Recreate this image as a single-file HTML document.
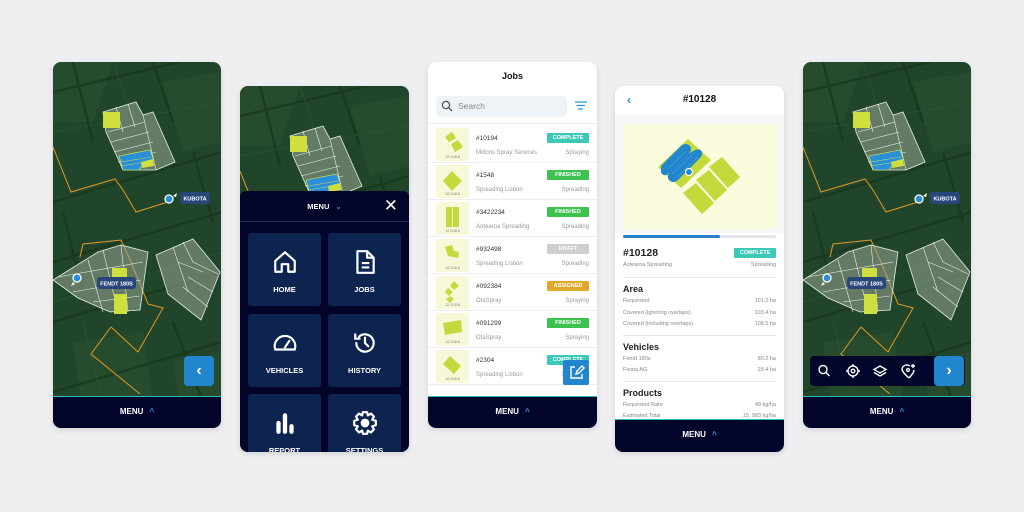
<!DOCTYPE html>
<html><head><meta charset="utf-8"><style>
*{box-sizing:border-box;margin:0;padding:0}
body{width:1024px;height:512px;background:#efeff1;font-family:"Liberation Sans",sans-serif;position:relative;overflow:hidden}
.ph{position:absolute;width:169px;height:366px;border-radius:8px;overflow:hidden;background:#fff;box-shadow:0 2px 6px rgba(0,0,0,.12)}
.map{position:absolute;left:0;top:0}
.menubar{position:absolute;left:0;right:0;bottom:0;height:32px;background:#03042a;border-top:1.5px solid #2bbfc0;color:#fff;font-size:8px;font-weight:bold;text-align:center;line-height:30px}
.menubar span{color:#3a8fd6;margin-left:6px;font-size:8px}
.tile{position:absolute;width:73px;height:73px;background:#0d2350;border-radius:3px;color:#fff;font-size:7.5px;font-weight:bold;text-align:center}
.tile svg{position:absolute;left:24px;top:16px}
.tile div{position:absolute;left:0;right:0;top:52px}
.row{position:absolute;left:0;width:169px;height:37px;border-bottom:1px solid #eee;font-size:6px;color:#999}
.thumb{position:absolute;left:8px;top:2px;width:33px;height:33px;background:#f8f8d8;border-radius:2px}
.thumb i{position:absolute;bottom:2px;left:0;right:0;text-align:center;font-style:normal;font-size:3.5px;color:#777}
.num{position:absolute;left:48px;top:9px;font-size:6.5px;color:#333}
.co{position:absolute;left:48px;top:24px}
.ty{position:absolute;right:8px;top:24px}
.bd{position:absolute;right:8px;top:7px;width:42px;height:10px;border-radius:1px;color:#fff;font-size:5.5px;font-weight:bold;text-align:center;line-height:10px}
.kv{display:flex;justify-content:space-between;font-size:5.5px;color:#888;height:11.5px}
.h{font-size:9px;font-weight:bold;color:#222;margin:6px 0 4px}
.sep{border-top:1px solid #e6e6e6;margin-top:2px}
</style></head><body>

<svg width="0" height="0" style="position:absolute">
<defs>
<g id="mapg">
<rect width="169" height="366" fill="#21452a"/>
<g fill="#2a5230" opacity=".6"><path d="M0 0 H60 L40 60 H0Z M110 20 L169 10 V80 L130 90Z M20 280 L90 270 L100 340 L30 350Z M120 300 L169 290 V366 H130Z"/></g>
<g stroke="#16331a" stroke-width="2.5" opacity=".6">
<path d="M0 30 L169 -10 M0 140 L169 90 M0 200 L169 150 M0 260 L169 210 M0 330 L169 280"/>
<path d="M20 0 L40 80 M100 0 L120 60 M140 90 L160 160 M10 150 L30 230 M120 260 L150 340"/>
</g>
<g stroke="#2d5a33" stroke-width="1.2" opacity=".5"><path d="M0 70 L169 40 M0 240 L169 190 M60 0 L80 60 M30 260 L50 340"/></g>
<path d="M0 85 L18 130 L62 117 L70 128 L83 150 L115 140" fill="none" stroke="#e09a28" stroke-width="1"/>
<path d="M27 195 L30 182 L68 178 L78 200 L95 242 L110 246 L85 290 L58 265 L38 292 L87 332" fill="none" stroke="#e09a28" stroke-width="1"/>
<g fill="#9aa896" fill-opacity=".55" stroke="#e8efe6" stroke-width=".8">
<path d="M50 50 L83 40 L90 53 L100 50 L122 100 L103 108 L70 108 L53 70 Z"/>
<path d="M0 218 L45 190 L68 183 L95 190 L87 248 L57 250 L25 236 Z"/>
<path d="M103 193 L140 177 L167 210 L148 258 L115 232 Z"/>
</g>
<g stroke="#e8efe6" stroke-width=".6" fill="none">
<path d="M55 70 L92 60 M58 80 L96 70 M61 90 L100 80 M65 100 L103 90 M63 45 L70 70 M75 42 L82 65 M90 53 L103 108"/>
<path d="M5 215 L90 200 M20 230 L88 218 M40 240 L87 234 M35 198 L50 250 M50 188 L65 250 M68 183 L75 250"/>
<path d="M120 185 L135 230 M130 180 L140 200 M140 200 L165 212 M135 215 L160 230 M130 225 L155 245 M125 200 L150 210"/>
</g>
<rect x="50" y="50" width="17" height="16" fill="#cfe03e"/>
<rect x="59" y="206" width="15" height="14" fill="#cfe03e"/>
<rect x="61" y="232" width="13" height="20" fill="#cfe03e"/>
<path d="M66 94 L97 88 L102 102 L88 105 L86 108 L70 108 Z" fill="#2a8fd8" stroke="#e6f040" stroke-width=".6"/>
<path d="M68 100 L98 95 M68 104 L99 99" stroke="#e6f040" stroke-width=".4"/>
<path d="M88 100 L100 97 L101 104 L89 106Z" fill="#cfe03e"/>
<circle cx="116" cy="137" r="4" fill="#2a8fd8" stroke="#fff" stroke-width="1.3"/>
<path d="M120 134 L124 131 L123 135Z" fill="#fff"/>
<circle cx="24" cy="216" r="4" fill="#2a8fd8" stroke="#fff" stroke-width="1.3"/>
<path d="M20 220 L18 224 L22 222Z" fill="#fff"/>
<rect x="127" y="130" width="30" height="12" rx="3" fill="#28467a"/>
<text x="142" y="138.5" font-size="5.5" fill="#fff" text-anchor="middle" font-family="Liberation Sans" font-weight="bold">KUBOTA</text>
<rect x="44" y="215" width="39" height="12" rx="3" fill="#28467a"/>
<text x="63.5" y="223.5" font-size="5.5" fill="#fff" text-anchor="middle" font-family="Liberation Sans" font-weight="bold">FENDT 180S</text>
</g>
</defs></svg>

<!-- Phone 1 -->
<div class="ph" style="left:53px;top:62px;width:168px">
<svg class="map" width="169" height="366"><use href="#mapg"/></svg>
<div style="position:absolute;left:131px;top:294px;width:30px;height:30px;background:#2286cf;border-radius:4px;color:#fff;text-align:center;line-height:30px;font-size:16px;font-weight:bold">‹</div>
<div class="menubar">MENU<span>^</span></div>
</div>

<!-- Phone 2 -->
<div class="ph" style="left:240px;top:86px">
<svg class="map" width="169" height="366"><use href="#mapg"/></svg>
<div style="position:absolute;left:0;top:105px;width:169px;height:261px;background:#03042a;border-radius:6px 6px 0 0">
<div style="position:absolute;left:0;right:0;top:0;height:31px;border-bottom:1px solid #1c2b55;color:#fff;font-size:7.5px;font-weight:bold;text-align:center;line-height:31px">MENU<span style="color:#3a8fd6;margin-left:6px">⌄</span></div>
<div style="position:absolute;right:11px;top:6px;color:#fff;font-size:17px;line-height:17px">✕</div>
<div class="tile" style="left:8px;top:42px"><svg width="26" height="26" viewBox="0 0 24 24" fill="none" stroke="#fff" stroke-width="2" stroke-linejoin="round"><path d="M3 11 L12 3 L21 11 V21 H15 V14 H9 V21 H3 Z"/></svg><div>HOME</div></div>
<div class="tile" style="left:88px;top:42px"><svg width="26" height="26" viewBox="0 0 24 24" fill="none" stroke="#fff" stroke-width="2" stroke-linejoin="round"><path d="M5 2 H14 L20 8 V22 H5 Z M14 2 V8 H20 M9 13 H16 M9 17 H16"/></svg><div>JOBS</div></div>
<div class="tile" style="left:8px;top:123px"><svg width="26" height="26" viewBox="0 0 24 24" fill="none" stroke="#fff" stroke-width="2" stroke-linecap="round"><path d="M3 18 A9.5 9.5 0 1 1 21 18 Z M12 16 L16 10"/></svg><div>VEHICLES</div></div>
<div class="tile" style="left:88px;top:123px"><svg width="26" height="26" viewBox="0 0 24 24" fill="none" stroke="#fff" stroke-width="2" stroke-linecap="round"><path d="M4 12 A8 8 0 1 0 6.5 6.2 M3 4 V8 H7 M12 7 V12 L15 15"/></svg><div>HISTORY</div></div>
<div class="tile" style="left:8px;top:203px"><svg width="26" height="26" viewBox="0 0 24 24" fill="#fff"><rect x="4" y="10" width="4" height="12" rx="2"/><rect x="10" y="3" width="4" height="19" rx="2"/><rect x="16" y="13" width="4" height="9" rx="2"/></svg><div>REPORT</div></div>
<div class="tile" style="left:88px;top:203px"><svg width="26" height="26" viewBox="0 0 24 24" fill="none" stroke="#fff" stroke-width="2"><circle cx="12" cy="12" r="3" fill="#fff"/><path d="M10 2 H14 L14.6 5 L17.5 3.3 L20.3 6.1 L18.6 9 L22 10 V14 L18.6 15 L20.3 17.9 L17.5 20.7 L14.6 19 L14 22 H10 L9.4 19 L6.5 20.7 L3.7 17.9 L5.4 15 L2 14 V10 L5.4 9 L3.7 6.1 L6.5 3.3 L9.4 5 Z" stroke-linejoin="round"/></svg><div>SETTINGS</div></div>
</div>
</div>

<!-- Phone 3 Jobs -->
<div class="ph" style="left:428px;top:62px">
<div style="position:absolute;left:0;right:0;top:9px;text-align:center;font-size:9px;font-weight:bold;color:#111">Jobs</div>
<div style="position:absolute;left:8px;top:34px;width:131px;height:21px;background:#eef3f8;border-radius:4px"></div>
<svg style="position:absolute;left:13px;top:38px" width="12" height="12" viewBox="0 0 12 12" fill="none" stroke="#555" stroke-width="1.3"><circle cx="5" cy="5" r="3.6"/><path d="M7.7 7.7 L11 11"/></svg>
<div style="position:absolute;left:30px;top:39px;font-size:8.5px;color:#888">Search</div>
<svg style="position:absolute;left:147px;top:39px" width="12" height="10"><path d="M0 1 H12 M1.5 4.5 H10 M3 8 H8" stroke="#2a8fd8" stroke-width="1.2"/></svg>
<div style="position:absolute;left:0;right:0;top:61px;height:1px;background:#eee"></div>
<div class="row" style="top:64px"><div class="thumb"><svg width="33" height="33"><path d="M9 9 L16 4 L20 10 L13 14Z M15 16 L22 12 L27 19 L19 24Z" fill="#c3d93c"/></svg><i>12.1/18.6</i></div><div class="num">#10194</div><div class="co">Miltons Spray Services</div><div class="ty">Spraying</div><div class="bd" style="background:#3ec8b8">COMPLETE</div></div>
<div class="row" style="top:101px"><div class="thumb"><svg width="33" height="33"><path d="M16 6 L26 16 L16 26 L7 16Z" fill="#c3d93c"/></svg><i>12.1/18.6</i></div><div class="num">#1548</div><div class="co">Spreading Lisbon</div><div class="ty">Spreading</div><div class="bd" style="background:#3ec24f">FINISHED</div></div>
<div class="row" style="top:138px"><div class="thumb"><svg width="33" height="33"><path d="M10 5 H16 V25 H10Z M17 5 H23 V25 H17Z" fill="#c3d93c"/></svg><i>12.1/18.6</i></div><div class="num">#3422234</div><div class="co">Aotearoa Spreading</div><div class="ty">Spreading</div><div class="bd" style="background:#3ec24f">FINISHED</div></div>
<div class="row" style="top:175px"><div class="thumb"><svg width="33" height="33"><path d="M9 8 L16 6 L18 12 L23 13 L22 19 L12 17Z" fill="#c3d93c"/></svg><i>12.1/18.6</i></div><div class="num">#932498</div><div class="co">Spreading Lisbon</div><div class="ty">Spreading</div><div class="bd" style="background:#cfcfcf">DRAFT</div></div>
<div class="row" style="top:212px"><div class="thumb"><svg width="33" height="33"><path d="M18 5 L23 10 L18 14 L14 10Z M12 12 L17 16 L13 20 L9 16Z M14 20 L18 23 L14 27 L10 23Z" fill="#c3d93c"/></svg><i>12.1/18.6</i></div><div class="num">#092384</div><div class="co">OtaSpray</div><div class="ty">Spraying</div><div class="bd" style="background:#e0a92c">ASSIGNED</div></div>
<div class="row" style="top:249px"><div class="thumb"><svg width="33" height="33"><path d="M7 10 L25 7 L26 19 L9 22Z" fill="#c3d93c"/></svg><i>12.1/18.6</i></div><div class="num">#091299</div><div class="co">OtaSpray</div><div class="ty">Spraying</div><div class="bd" style="background:#3ec24f">FINISHED</div></div>
<div class="row" style="top:286px"><div class="thumb"><svg width="33" height="33"><path d="M14 6 L25 16 L18 24 L7 14Z" fill="#c3d93c"/></svg><i>12.1/18.6</i></div><div class="num">#2304</div><div class="co">Spreading Lisbon</div><div class="ty">Spreading</div><div class="bd" style="background:#3ec8b8">COMPLETE</div></div>
<div style="position:absolute;left:135px;top:298px;width:26px;height:25px;background:#2286cf;border-radius:2px"><svg width="26" height="25" viewBox="0 0 26 25" fill="none" stroke="#fff" stroke-width="1.4"><path d="M12 7 H8 V18 H19 V14 M13 14 L14 11 L19 6 L21 8 L16 13 Z"/></svg></div>
<div class="menubar">MENU<span>^</span></div>
</div>

<!-- Phone 4 detail -->
<div class="ph" style="left:615px;top:86px">
<div style="position:absolute;left:12px;top:7px;color:#2a8fd8;font-size:12px;font-weight:bold">‹</div>
<div style="position:absolute;left:0;right:0;top:8px;text-align:center;font-size:10px;font-weight:bold;color:#111">#10128</div>
<div style="position:absolute;left:0;right:0;top:29px;height:118px;background:#f7f7f7"></div>
<div style="position:absolute;left:9px;top:38px;width:153px;height:105px;background:#fafadc;border-radius:3px">
<svg width="153" height="105"><g fill="#c3d93c"><path d="M34 43 L64 15 L87 36 L57 64Z"/><path d="M59 69 L72 59 L90 79 L78 90Z M72 56 L85 46 L103 66 L91 77Z M85 43 L98 33 L116 53 L104 64Z"/></g>
<path d="M37 42 L57 22 Q62 18 66 22 Q69 26 64 30 L71 26 Q76 24 78 28 Q79 32 74 36 L54 56 Q49 60 45 56 Q42 52 47 47 L43 51 Q38 52 37 48Z" fill="#2286cf"/>
<path d="M44 45 L62 27 M48 50 L70 29 M52 54 L74 33" stroke="#7fc0ee" stroke-width=".4"/>
<circle cx="65" cy="48" r="3.5" fill="#2286cf" stroke="#fff" stroke-width="1.2"/></svg></div>
<div style="position:absolute;left:8px;top:149px;width:153px;height:3px;background:#e4e7ec;border-radius:2px"><div style="width:97px;height:3px;background:#2a7fc7;border-radius:2px"></div></div>
<div style="position:absolute;left:8px;top:161px;font-size:10.5px;font-weight:bold;color:#222">#10128</div>
<div style="position:absolute;right:8px;top:162px;width:42px;height:10px;background:#3ec8b8;color:#fff;font-size:5.5px;font-weight:bold;text-align:center;line-height:10px;border-radius:1px">COMPLETE</div>
<div style="position:absolute;left:8px;right:8px;top:176px" class="kv"><span>Aotearoa Spreading</span><span>Spreading</span></div>
<div style="position:absolute;left:8px;right:8px;top:189px">
<div class="sep"></div>
<div class="h">Area</div>
<div class="kv"><span>Requested</span><span>101.2 ha</span></div>
<div class="kv"><span>Covered (ignoring overlaps)</span><span>103.4 ha</span></div>
<div class="kv"><span>Covered (including overlaps)</span><span>108.5 ha</span></div>
<div class="sep" style="margin-top:2px"></div>
<div class="h">Vehicles</div>
<div class="kv"><span>Fendt 180s</span><span>80.2 ha</span></div>
<div class="kv"><span>Fiesta AG</span><span>28.4 ha</span></div>
<div class="sep" style="margin-top:2px"></div>
<div class="h">Products</div>
<div class="kv"><span>Requested Rate</span><span>48 kg/ha</span></div>
<div class="kv"><span>Estimated Total</span><span>15, 983 kg/ha</span></div>
</div>
<div class="menubar" style="height:33px">MENU<span>^</span></div>
</div>

<!-- Phone 5 -->
<div class="ph" style="left:803px;top:62px;width:168px">
<svg class="map" width="169" height="366"><use href="#mapg"/></svg>
<div style="position:absolute;left:7px;top:294px;width:155px;height:30px;background:#03062b;border-radius:4px"></div>
<div style="position:absolute;left:131px;top:294px;width:30px;height:30px;background:#2286cf;border-radius:4px;color:#fff;text-align:center;line-height:30px;font-size:16px;font-weight:bold">›</div>
<svg style="position:absolute;left:14px;top:301px" width="110" height="16" fill="none" stroke="#fff" stroke-width="1.4">
<circle cx="6" cy="6.5" r="4"/><path d="M9 9.5 L12.5 13"/>
<circle cx="36" cy="8" r="5"/><circle cx="36" cy="8" r="1.8"/><path d="M36 1 V3 M36 13 V15 M29 8 H31 M41 8 H43"/>
<path d="M63 3 L69 6.5 L63 10 L57 6.5Z M57 9.5 L63 13 L69 9.5"/>
<path d="M92 15 C86 10 85 7 85 6 A5 5 0 0 1 93 3 M92 15 C96 11 97 8 97 7"/><circle cx="91" cy="7" r="1.4"/><path d="M96 1 V5 M94 3 H98"/>
</svg>
<div class="menubar">MENU<span>^</span></div>
</div>

</body></html>
